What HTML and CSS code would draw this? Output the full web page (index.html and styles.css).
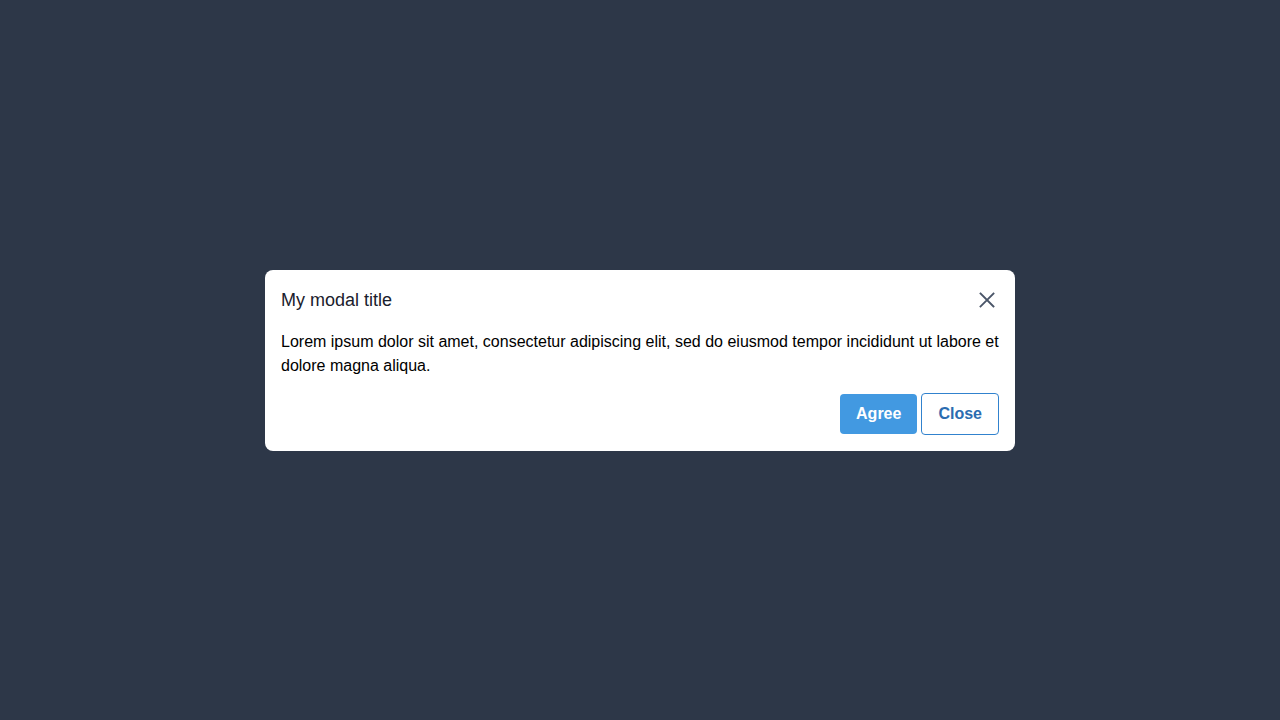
FILE: index.html
```html
<!DOCTYPE html>
<html lang="en">
<head>
<meta charset="utf-8">
<title>Modal</title>
<link rel="stylesheet" href="styles.css">
</head>
<body>
<div class="overlay">
  <div class="modal" role="dialog">
    <div class="modal-header">
      <h2 class="modal-title">My modal title</h2>
      <button class="close-x" aria-label="Close">
        <svg width="16" height="16" viewBox="0 0 16 16"><path d="M1.5 1.5 L14.5 14.5 M14.5 1.5 L1.5 14.5" stroke="#4a5568" stroke-width="1.8" stroke-linecap="square" fill="none"/></svg>
      </button>
    </div>
    <div class="modal-body">Lorem ipsum dolor sit amet, consectetur adipiscing elit, sed do eiusmod tempor incididunt ut labore et dolore magna aliqua.</div>
    <div class="modal-footer">
      <button class="btn btn-primary">Agree</button>
      <button class="btn btn-outline">Close</button>
    </div>
  </div>
</div>
</body>
</html>
```

FILE: styles.css
```css
* { box-sizing: border-box; }
html, body { margin: 0; padding: 0; height: 100%; }
body {
  background: #2d3748;
  font-family: "Liberation Sans", Arial, sans-serif;
}
.overlay {
  height: 100%;
  display: flex;
  align-items: center;
  justify-content: center;
}
.modal {
  width: 750px;
  background: #ffffff;
  border-radius: 8px;
}
.modal-header {
  display: flex;
  align-items: center;
  justify-content: space-between;
  padding: 16px 16px 0 16px;
  height: 44px;
}
.modal-title {
  margin: 0;
  font-size: 18px;
  line-height: 28px;
  font-weight: normal;
  color: #1a202c;
}
.close-x {
  border: 0;
  background: none;
  padding: 0;
  width: 16px;
  height: 16px;
  display: flex;
  margin-right: 4px;
  cursor: pointer;
}
.modal-body {
  padding: 16px 16px 0 16px;
  font-size: 16px;
  line-height: 24px;
  color: #000000;
}
.modal-footer {
  display: flex;
  justify-content: flex-end;
  align-items: center;
  gap: 4px;
  padding: 15px 16px 16px 16px;
}
.btn {
  font-family: "Liberation Sans", Arial, sans-serif;
  font-size: 16px;
  font-weight: bold;
  line-height: 24px;
  padding: 8px 16px;
  border-radius: 4px;
  cursor: pointer;
}
.btn-primary {
  background: #4299e1;
  color: #ffffff;
  border: 0;
}
.btn-outline {
  background: #ffffff;
  color: #2b6cb0;
  border: 1px solid #3182ce;
}
```
